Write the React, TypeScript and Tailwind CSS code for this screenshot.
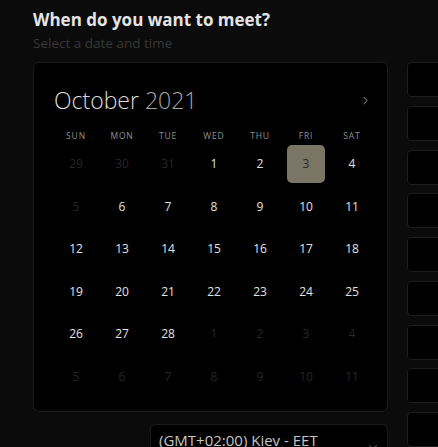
import { ChevronRight, ChevronDown } from 'lucide-react';

const DAYS = ['SUN', 'MON', 'TUE', 'WED', 'THU', 'FRI', 'SAT'];

type Cell = { n: number; muted?: boolean };

function buildMonth(): Cell[] {
  const cells: Cell[] = [];
  [29, 30, 31].forEach((n) => cells.push({ n, muted: true }));
  for (let d = 1; d <= 28; d++) cells.push({ n: d, muted: d === 5 });
  for (let d = 1; d <= 11; d++) cells.push({ n: d, muted: true });
  return cells;
}

export default function App() {
  const cells = buildMonth();
  const slots = Array.from({ length: 9 });

  return (
    <div className="w-[438px] h-[447px] overflow-hidden bg-[#0b0b0b] font-['Open_Sans',sans-serif]">
      <div className="pl-[33px] pt-[9px]">
        <h1 className="text-[17px] leading-[22px] font-bold text-[#e4e4e4] whitespace-nowrap">
          When do you want to meet?
        </h1>
        <p className="mt-[4px] text-[13.5px] leading-[16px] text-[#383838]">Select a date and time</p>

        <div className="mt-[11px] flex gap-[19px]">
          <div className="w-[355px] shrink-0">
            <div className="h-[350px] rounded-[6px] border border-[#1a1a1a] bg-black pl-[19px] pr-[13px]">
              <div className="flex items-center justify-between h-[32px] mt-[21px] pr-[2px]">
                <div className="text-[23px] font-light text-[#dcdcdc] leading-none pl-[1px]">
                  October <span className="text-[#a8a8a8]">2021</span>
                </div>
                <ChevronRight className="w-[13px] h-[13px] text-[#bdbdbd]" strokeWidth={1.5} />
              </div>

              <div className="grid grid-cols-[repeat(7,46px)] mt-[13px]">
                {DAYS.map((d) => (
                  <div key={d} className="h-[14px] flex items-center justify-center text-[8.5px] tracking-[0.1em] text-[#909090]">
                    {d}
                  </div>
                ))}
              </div>

              <div className="grid grid-cols-[repeat(7,46px)] gap-y-[4.5px] mt-[2px]">
                {cells.map((c, i) => {
                  const selected = !c.muted && c.n === 3 && i < 7;
                  return (
                    <div key={i} className="h-[38px] flex items-center justify-center">
                      {selected ? (
                        <div className="w-[38px] h-[38px] rounded-[5px] bg-[#7a7565] flex items-center justify-center text-[12px] text-[#2b2a26]">
                          {c.n}
                        </div>
                      ) : (
                        <span className={`text-[12px] ${c.muted ? 'text-[#262626]' : 'text-[#e2e2e2]'}`}>{c.n}</span>
                      )}
                    </div>
                  );
                })}
              </div>
            </div>

            <div className="mt-[12px] ml-[117px] h-[40px] rounded-[6px] border border-[#1a1a1a] bg-black pl-[8px] pr-[7px] pt-[4px] flex items-start justify-between">
              <span className="text-[15px] leading-[22px] text-[#c4c4c4] whitespace-nowrap">(GMT+02:00) Kiev - EET</span>
              <ChevronDown className="w-[14px] h-[14px] mt-[11px] shrink-0 text-[#707070]" strokeWidth={1.5} />
            </div>
          </div>

          <div className="w-[200px] shrink-0 flex flex-col gap-[8.75px]">
            {slots.map((_, i) => (
              <div key={i} className="h-[35px] shrink-0 rounded-[4px] border border-[#1c1c1c] bg-black" />
            ))}
          </div>
        </div>
      </div>
    </div>
  );
}
